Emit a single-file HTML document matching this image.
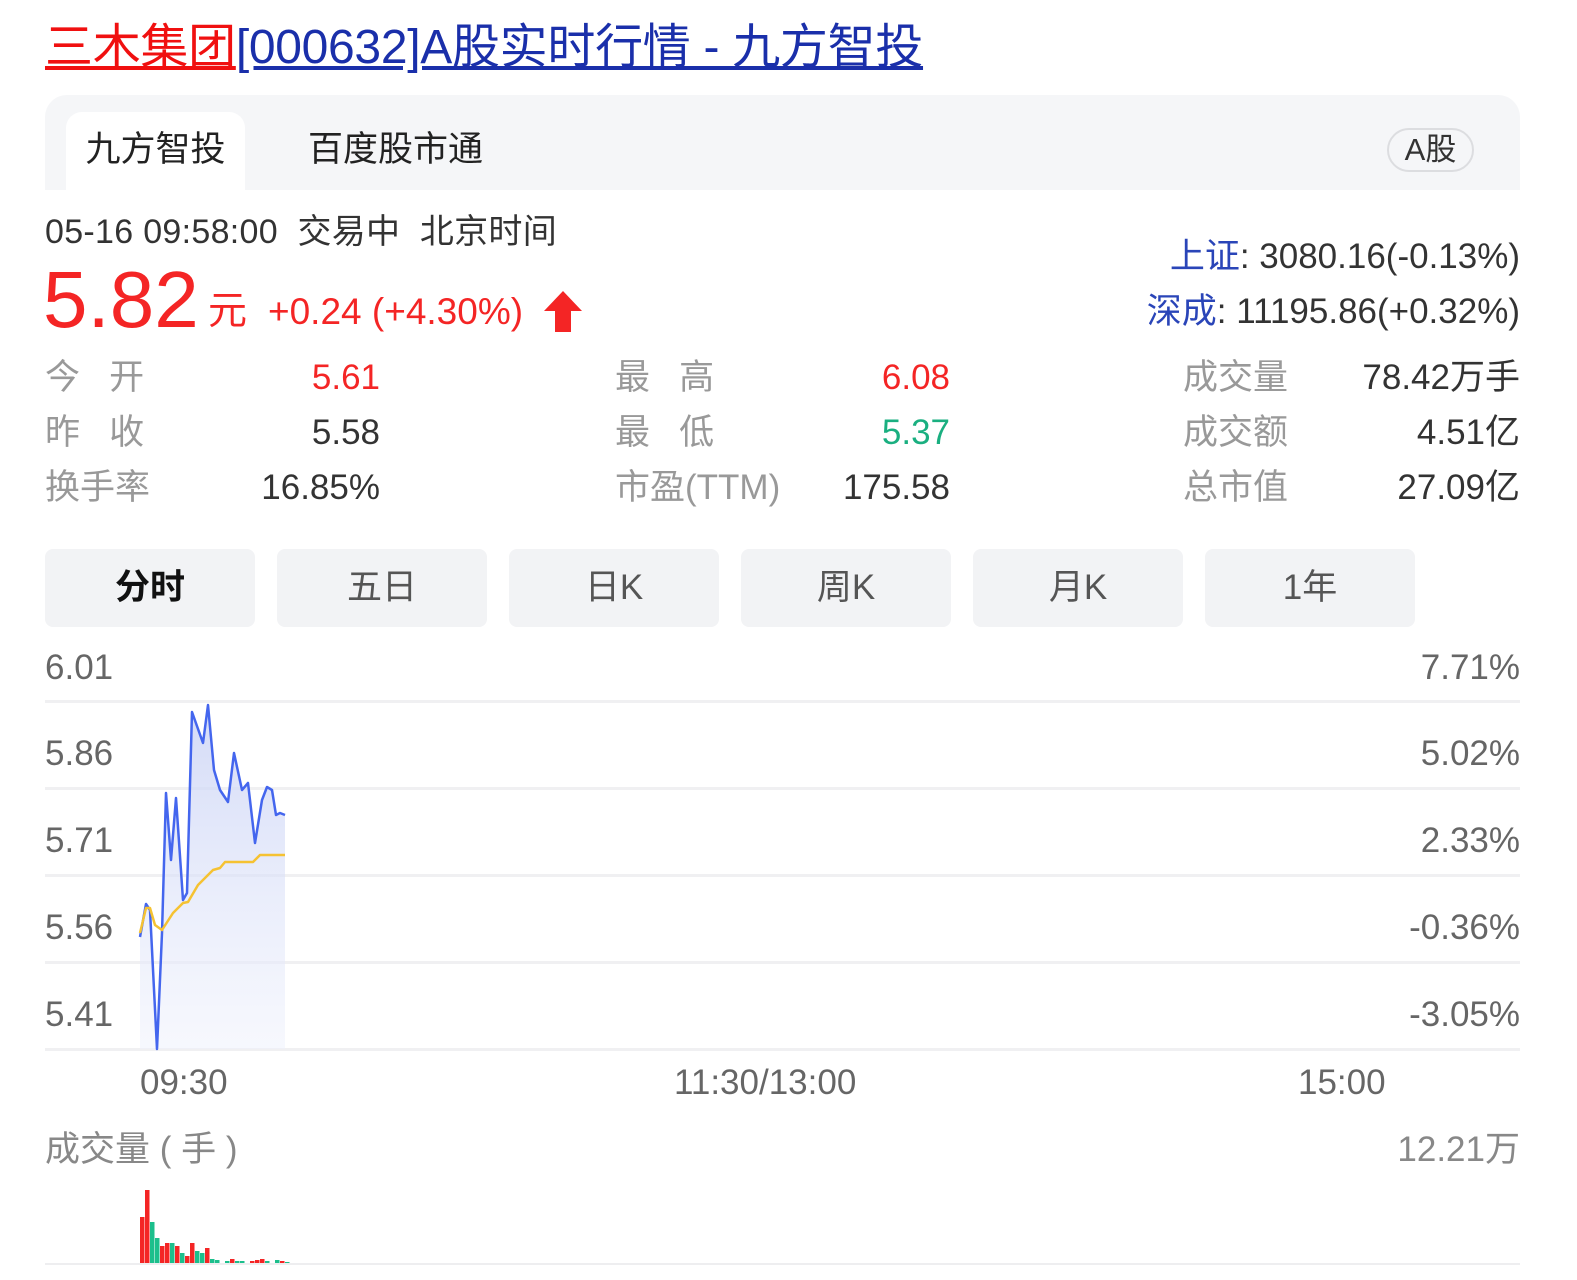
<!DOCTYPE html>
<html><head><meta charset="utf-8">
<style>
*{margin:0;padding:0;box-sizing:border-box}
body{width:1577px;height:1280px;background:#fff;position:relative;overflow:hidden;font-family:"Liberation Sans","Noto Sans CJK SC",sans-serif;color:#333}
.a{position:absolute;white-space:nowrap}
.t{height:50px;line-height:50px}
.lab{color:#999;font-size:35px}
.val{color:#333;font-size:35px;text-align:right}
.btn{position:absolute;top:549px;width:210px;height:78px;background:#f2f3f5;border-radius:8px;text-align:center;line-height:78px;font-size:35px;color:#555}
.yl{position:absolute;font-size:35px;color:#666;height:40px;line-height:40px}
.gl{position:absolute;left:45px;width:1475px;height:3px;background:#f0f0f2}
</style></head><body>
<div class="a" style="left:45px;top:21px;font-size:48px;line-height:54px;height:54px;letter-spacing:-0.3px">
<span style="color:#f01010;text-decoration:underline">三木集团</span><span style="color:#1a2faa;text-decoration:underline">[000632]A股实时行情 - 九方智投</span></div>

<div class="a" style="left:45px;top:95px;width:1475px;height:95px;background:#f5f6f8;border-radius:22px 22px 0 0"></div>
<div class="a" style="left:66px;top:112px;width:179px;height:78px;background:#fff;border-radius:16px 16px 0 0;text-align:center;line-height:76px;font-size:35px;color:#222">九方智投</div>
<div class="a" style="left:308px;top:112px;height:78px;line-height:76px;font-size:35px;color:#222">百度股市通</div>
<div class="a" style="left:1387px;top:128px;width:87px;height:44px;border:2px solid #dcdde0;border-radius:22px;text-align:center;line-height:40px;font-size:31px;color:#333">A股</div>

<div class="a t" style="left:45px;top:207px;font-size:34px;color:#333;letter-spacing:0.3px">05-16 09:58:00&nbsp; 交易中&nbsp; 北京时间</div>
<div class="a" style="left:43px;top:258px;font-size:80px;line-height:84px;color:#f42525">5.82</div>
<div class="a" style="left:208px;top:289px;font-size:39px;line-height:46px;color:#f42525">元</div>
<div class="a" style="left:268px;top:289px;font-size:37px;line-height:46px;color:#f42525">+0.24 (+4.30%)</div>
<svg class="a" style="left:542px;top:289px" width="42" height="44" viewBox="0 0 42 44"><path d="M21 2 L40 22 L29 22 L29 43 L13 43 L13 22 L2 22 Z" fill="#f42525"/></svg>

<div class="a t" style="right:57px;top:232px;font-size:35px;color:#333"><span style="color:#2a45b8">上证</span>: 3080.16(-0.13%)</div>
<div class="a t" style="right:57px;top:287px;font-size:35px;color:#333"><span style="color:#2a45b8">深成</span>: 11195.86(+0.32%)</div>

<div class="a t lab" style="left:45px;top:353px">今&nbsp;&nbsp;&nbsp;开</div>
<div class="a t val" style="right:1197px;top:353px;color:#f42525">5.61</div>
<div class="a t lab" style="left:45px;top:408px">昨&nbsp;&nbsp;&nbsp;收</div>
<div class="a t val" style="right:1197px;top:408px">5.58</div>
<div class="a t lab" style="left:45px;top:463px">换手率</div>
<div class="a t val" style="right:1197px;top:463px">16.85%</div>

<div class="a t lab" style="left:615px;top:353px">最&nbsp;&nbsp;&nbsp;高</div>
<div class="a t val" style="right:627px;top:353px;color:#f42525">6.08</div>
<div class="a t lab" style="left:615px;top:408px">最&nbsp;&nbsp;&nbsp;低</div>
<div class="a t val" style="right:627px;top:408px;color:#1aaf80">5.37</div>
<div class="a t lab" style="left:615px;top:463px">市盈(TTM)</div>
<div class="a t val" style="right:627px;top:463px">175.58</div>

<div class="a t lab" style="left:1183px;top:353px">成交量</div>
<div class="a t val" style="right:57px;top:353px">78.42万手</div>
<div class="a t lab" style="left:1183px;top:408px">成交额</div>
<div class="a t val" style="right:57px;top:408px">4.51亿</div>
<div class="a t lab" style="left:1183px;top:463px">总市值</div>
<div class="a t val" style="right:57px;top:463px">27.09亿</div>

<div class="btn" style="left:45px;font-weight:bold;color:#111">分时</div>
<div class="btn" style="left:277px">五日</div>
<div class="btn" style="left:509px">日K</div>
<div class="btn" style="left:741px">周K</div>
<div class="btn" style="left:973px">月K</div>
<div class="btn" style="left:1205px">1年</div>

<div class="yl" style="left:45px;top:648px">6.01</div>
<div class="yl" style="left:45px;top:734px">5.86</div>
<div class="yl" style="left:45px;top:821px">5.71</div>
<div class="yl" style="left:45px;top:908px">5.56</div>
<div class="yl" style="left:45px;top:995px">5.41</div>
<div class="yl" style="right:57px;top:648px">7.71%</div>
<div class="yl" style="right:57px;top:734px">5.02%</div>
<div class="yl" style="right:57px;top:821px">2.33%</div>
<div class="yl" style="right:57px;top:908px">-0.36%</div>
<div class="yl" style="right:57px;top:995px">-3.05%</div>
<div class="gl" style="top:700px"></div>
<div class="gl" style="top:787px"></div>
<div class="gl" style="top:874px"></div>
<div class="gl" style="top:961px"></div>
<div class="gl" style="top:1048px"></div>

<svg class="a" style="left:0;top:0" width="1577" height="1280">
<defs><linearGradient id="g" x1="0" y1="0" x2="0" y2="1"><stop offset="0" stop-color="#c9d2f5" stop-opacity=".8"/><stop offset="1" stop-color="#eef1fc" stop-opacity=".5"/></linearGradient></defs>
<path d="M140,937 L146,904 L150,910 L157,1049 L162,933 L166,793 L171,860 L176,798 L183,900 L187,893 L192,712 L203,743 L208,705 L214,770 L220,790 L228,802 L234,753 L242,790 L248,783 L255,843 L262,800 L267,787 L272,790 L276,815 L280,813 L285,815 L285,1049 L140,1049 Z" fill="url(#g)"/>
<polyline points="140,937 146,904 150,910 157,1049 162,933 166,793 171,860 176,798 183,900 187,893 192,712 203,743 208,705 214,770 220,790 228,802 234,753 242,790 248,783 255,843 262,800 267,787 272,790 276,815 280,813 285,815" fill="none" stroke="#4466ee" stroke-width="2.5" stroke-linejoin="round"/>
<polyline points="140,933 146,908 150,908 155,925 162,930 173,913 183,903 188,902 198,885 213,870 220,868 225,862 253,862 260,855 285,855" fill="none" stroke="#f5c232" stroke-width="2.5" stroke-linejoin="round"/>
<rect x="45" y="1263" width="1475" height="2" fill="#eeeef0"/>
</svg>

<div class="yl" style="left:140px;top:1063px">09:30</div>
<div class="yl" style="left:674px;top:1063px">11:30/13:00</div>
<div class="yl" style="left:1298px;top:1063px">15:00</div>
<div class="yl" style="left:45px;top:1130px;color:#888">成交量 ( 手 )</div>
<div class="yl" style="right:57px;top:1130px;color:#888">12.21万</div>

<svg class="a" style="left:0;top:0" width="1577" height="1280">
<g>
<rect x="140" y="1217" width="4.5" height="46" fill="#f42525"/>
<rect x="145" y="1190" width="4.5" height="73" fill="#f42525"/>
<rect x="150" y="1222" width="4.5" height="41" fill="#1cbf8c"/>
<rect x="155" y="1238" width="4.5" height="25" fill="#1cbf8c"/>
<rect x="160" y="1246" width="4.5" height="17" fill="#f42525"/>
<rect x="165" y="1243" width="4.5" height="20" fill="#f42525"/>
<rect x="170" y="1243" width="4.5" height="20" fill="#1cbf8c"/>
<rect x="175" y="1246" width="4.5" height="17" fill="#f42525"/>
<rect x="180" y="1253" width="4.5" height="10" fill="#1cbf8c"/>
<rect x="185" y="1256" width="4.5" height="7" fill="#f42525"/>
<rect x="190" y="1243" width="4.5" height="20" fill="#f42525"/>
<rect x="195" y="1251" width="4.5" height="12" fill="#1cbf8c"/>
<rect x="200" y="1253" width="4.5" height="10" fill="#1cbf8c"/>
<rect x="205" y="1248" width="4.5" height="15" fill="#f42525"/>
<rect x="210" y="1259" width="4.5" height="4" fill="#1cbf8c"/>
<rect x="215" y="1260" width="4.5" height="3" fill="#1cbf8c"/>
<rect x="225" y="1261" width="4.5" height="2" fill="#1cbf8c"/>
<rect x="230" y="1259" width="4.5" height="4" fill="#f42525"/>
<rect x="235" y="1261" width="4.5" height="2" fill="#1cbf8c"/>
<rect x="240" y="1261" width="4.5" height="2" fill="#1cbf8c"/>
<rect x="250" y="1261" width="4.5" height="2" fill="#f42525"/>
<rect x="255" y="1260" width="4.5" height="3" fill="#f42525"/>
<rect x="260" y="1259" width="4.5" height="4" fill="#f42525"/>
<rect x="265" y="1261" width="4.5" height="2" fill="#1cbf8c"/>
<rect x="275" y="1260" width="4.5" height="3" fill="#1cbf8c"/>
<rect x="280" y="1261" width="4.5" height="2" fill="#f42525"/>
<rect x="285" y="1262" width="4.5" height="1" fill="#1cbf8c"/>
</g>
</svg>
</body></html>
